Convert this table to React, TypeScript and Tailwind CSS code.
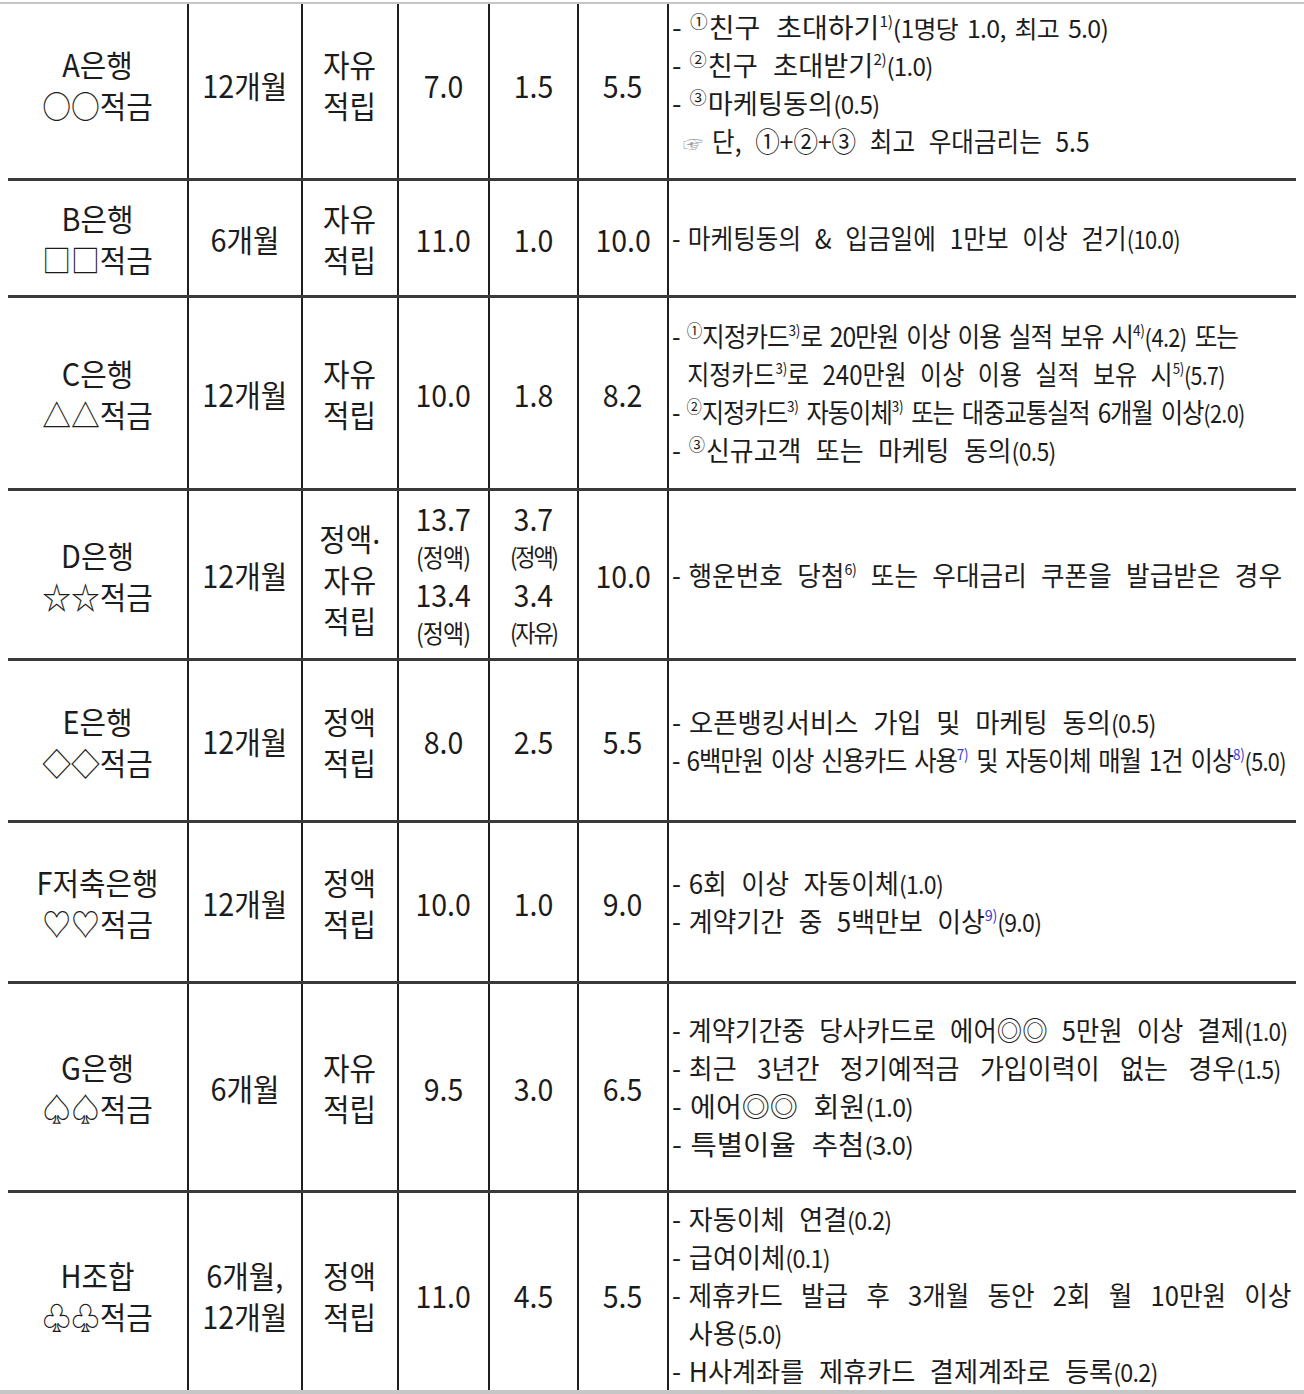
import React from "react";

type Seg =
  | string
  | { t: string; k: "sup" | "supb" | "sm" | "circ" | "hand" | "dash" };

type Line = { segs: Seg[]; indent?: string; tight?: boolean; ws?: string; sx: string };

type Row = {
  h: string;
  pad?: string;
  name: React.ReactNode[];
  period: React.ReactNode[];
  type: React.ReactNode[];
  max: React.ReactNode;
  base: React.ReactNode;
  pref: string;
  lines: Line[];
  last?: boolean;
};

const sup = (t: string): Seg => ({ t, k: "sup" });
const supb = (t: string): Seg => ({ t, k: "supb" });
const sm = (t: string): Seg => ({ t, k: "sm" });
const circ = (t: string): Seg => ({ t, k: "circ" });
const D: Seg = { t: "-", k: "dash" };

function SegView({ s }: { s: Seg }) {
  if (typeof s === "string") return <span>{s}</span>;
  if (s.k === "dash") return <span className="mr-[8px]">-</span>;
  if (s.k === "sup")
    return <span className="text-[15px] leading-none align-[11px] tracking-[-0.02em]">{s.t}</span>;
  if (s.k === "supb")
    return (
      <span className="text-[15px] leading-none align-[11px] tracking-[-0.02em] text-[#3b3bd6]">{s.t}</span>
    );
  if (s.k === "circ")
    return <span className="text-[17px] leading-none align-[10px] mr-[1px]">{s.t}</span>;
  if (s.k === "hand")
    return <span className="text-[22px] text-[#a0a0a0] mr-[10px]">{s.t}</span>;
  return <span className="text-[24px] tracking-[-0.03em] [word-spacing:4px]">{s.t}</span>;
}

function Stack({ lines }: { lines: React.ReactNode[] }) {
  return (
    <div className="text-center scale-x-[0.93] text-[31px] leading-[41px]">
      {lines.map((l, i) => (
        <div key={i} className="whitespace-nowrap">
          {l}
        </div>
      ))}
    </div>
  );
}

function Num({ v }: { v: string }) {
  return <div className="text-[31px] leading-[41px] scale-x-[0.92] whitespace-nowrap">{v}</div>;
}

function DualNum({ a, aa, b, bb, narrow }: { a: string; aa: string; b: string; bb: string; narrow?: boolean }) {
  const sub = narrow
    ? "text-[24px] leading-[38px] tracking-[-0.1em]"
    : "text-[25px] leading-[38px] tracking-[-0.04em]";
  return (
    <div className="text-center scale-x-[0.92] whitespace-nowrap">
      <div className="text-[31px] leading-[38px]">{a}</div>
      <div className={sub}>{aa}</div>
      <div className="text-[31px] leading-[38px]">{b}</div>
      <div className={sub}>{bb}</div>
    </div>
  );
}

const rows: Row[] = [
  {
    h: "h-[177px]",
    pad: "pb-[14px]",
    name: ["A은행", "○○적금"],
    period: ["12개월"],
    type: ["자유", "적립"],
    max: <Num v="7.0" />,
    base: <Num v="1.5" />,
    pref: "5.5",
    lines: [
      { segs: [D, circ("①"), "친구 초대하기", sup("1)"), sm("(1명당 1.0, 최고 5.0)")], sx: "scale-x-[1.04]" },
      { segs: [D, circ("②"), "친구 초대받기", sup("2)"), sm("(1.0)")], sx: "scale-x-[1.01]" },
      { segs: [D, circ("③"), "마케팅동의", sm("(0.5)")], sx: "scale-x-[1.01]" },
      {
        segs: [{ t: "☞", k: "hand" }, "단, ①+②+③ 최고 우대금리는 5.5"],
        indent: "pl-[12px]",
        sx: "scale-x-[0.91]",
      },
    ],
  },
  {
    h: "h-[117px]",
    name: ["B은행", "□□적금"],
    period: ["6개월"],
    type: ["자유", "적립"],
    max: <Num v="11.0" />,
    base: <Num v="1.0" />,
    pref: "10.0",
    lines: [{ segs: [D, "마케팅동의 & 입금일에 1만보 이상 걷기", sm("(10.0)")], sx: "scale-x-[0.912]" }],
  },
  {
    h: "h-[193px]",
    name: ["C은행", "△△적금"],
    period: ["12개월"],
    type: ["자유", "적립"],
    max: <Num v="10.0" />,
    base: <Num v="1.8" />,
    pref: "8.2",
    lines: [
      {
        segs: [D, circ("①"), "지정카드", sup("3)"), "로 20만원 이상 이용 실적 보유 시", sup("4)"), sm("(4.2)"), " 또는"],
        tight: true,
        sx: "scale-x-[0.914]",
      },
      {
        segs: ["지정카드", sup("3)"), "로 240만원 이상 이용 실적 보유 시", sup("5)"), sm("(5.7)")],
        indent: "pl-[17px]",
        sx: "scale-x-[0.89]",
      },
      {
        segs: [D, circ("②"), "지정카드", sup("3)"), " 자동이체", sup("3)"), " 또는 대중교통실적 6개월 이상", sm("(2.0)")],
        tight: true,
        sx: "scale-x-[0.902]",
      },
      { segs: [D, circ("③"), "신규고객 또는 마케팅 동의", sm("(0.5)")], sx: "scale-x-[0.96]" },
    ],
  },
  {
    h: "h-[170px]",
    name: ["D은행", "☆☆적금"],
    period: ["12개월"],
    type: [
      <span key="a">
        정액<span className="align-[7px]">.</span>
      </span>,
      "자유",
      "적립",
    ],
    max: <DualNum a="13.7" aa="(정액)" b="13.4" bb="(정액)" />,
    base: <DualNum a="3.7" aa="(정액)" b="3.4" bb="(자유)" narrow />,
    pref: "10.0",
    lines: [{ segs: [D, "행운번호 당첨", sup("6)"), " 또는 우대금리 쿠폰을 발급받은 경우"], sx: "scale-x-[0.95]" }],
  },
  {
    h: "h-[162px]",
    name: ["E은행", "◇◇적금"],
    period: ["12개월"],
    type: ["정액", "적립"],
    max: <Num v="8.0" />,
    base: <Num v="2.5" />,
    pref: "5.5",
    lines: [
      { segs: [D, "오픈뱅킹서비스 가입 및 마케팅 동의", sm("(0.5)")], sx: "scale-x-[0.975]" },
      {
        segs: [D, "6백만원 이상 신용카드 사용", supb("7)"), " 및 자동이체 매월 1건 이상", supb("8)"), sm("(5.0)")],
        tight: true,
        sx: "scale-x-[0.9]",
      },
    ],
  },
  {
    h: "h-[161px]",
    name: ["F저축은행", "♡♡적금"],
    period: ["12개월"],
    type: ["정액", "적립"],
    max: <Num v="10.0" />,
    base: <Num v="1.0" />,
    pref: "9.0",
    lines: [
      { segs: [D, "6회 이상 자동이체", sm("(1.0)")], sx: "scale-x-[0.96]" },
      { segs: [D, "계약기간 중 5백만보 이상", supb("9)"), sm("(9.0)")], sx: "scale-x-[0.96]" },
    ],
  },
  {
    h: "h-[209px]",
    name: ["G은행", "♤♤적금"],
    period: ["6개월"],
    type: ["자유", "적립"],
    max: <Num v="9.5" />,
    base: <Num v="3.0" />,
    pref: "6.5",
    lines: [
      { segs: [D, "계약기간중 당사카드로 에어◎◎ 5만원 이상 결제", sm("(1.0)")], sx: "scale-x-[0.94]" },
      {
        segs: [D, "최근 3년간 정기예적금 가입이력이 없는 경우", sm("(1.5)")],
        ws: "[word-spacing:15px]",
        sx: "scale-x-[0.965]",
      },
      { segs: [D, "에어◎◎ 회원", sm("(1.0)")], sx: "scale-x-[1.04]" },
      { segs: [D, "특별이율 추첨", sm("(3.0)")], sx: "scale-x-[1.06]" },
    ],
  },
  {
    h: "h-[197px]",
    pad: "pt-[6px]",
    name: ["H조합", "♧♧적금"],
    period: ["6개월,", "12개월"],
    type: ["정액", "적립"],
    max: <Num v="11.0" />,
    base: <Num v="4.5" />,
    pref: "5.5",
    last: true,
    lines: [
      { segs: [D, "자동이체 연결", sm("(0.2)")], sx: "scale-x-[0.965]" },
      { segs: [D, "급여이체", sm("(0.1)")], sx: "scale-x-[0.97]" },
      {
        segs: [D, "제휴카드 발급 후 3개월 동안 2회 월 10만원 이상"],
        ws: "[word-spacing:13px]",
        sx: "scale-x-[0.95]",
      },
      { segs: ["사용", sm("(5.0)")], indent: "pl-[17px]", sx: "scale-x-[0.975]" },
      { segs: [D, "H사계좌를 제휴카드 결제계좌로 등록", sm("(0.2)")], sx: "scale-x-[0.97]" },
    ],
  },
];

const cell = "flex items-center justify-center border-r-2 border-[#1f1f1f]";

export default function App() {
  return (
    <div className="w-[1304px] h-[1394px] bg-white overflow-hidden text-[#1c1c1c] font-['Noto_Sans_CJK_KR','Noto_Sans',sans-serif]">
      <div className="h-[2px]" />
      <div className="h-[2px] bg-[#c6c6c6]" />
      <div className="ml-[8px] w-[1288px]">
        {rows.map((r, i) => (
          <div
            key={i}
            className={`grid grid-cols-[181px_114px_96px_91px_89px_90px_627px] ${r.h} ${
              r.last ? "" : "border-b-[3px] border-[#3a3a3a]"
            }`}
          >
            <div className={`${cell} ${r.pad ?? ""}`}>
              <Stack lines={r.name} />
            </div>
            <div className={`${cell} ${r.pad ?? ""}`}>
              <Stack lines={r.period} />
            </div>
            <div className={`${cell} ${r.pad ?? ""}`}>
              <Stack lines={r.type} />
            </div>
            <div className={`${cell} ${r.pad ?? ""}`}>{r.max}</div>
            <div className={`${cell} ${r.pad ?? ""}`}>{r.base}</div>
            <div className={`${cell} ${r.pad ?? ""}`}>
              <Num v={r.pref} />
            </div>
            <div className={`flex flex-col justify-center pl-[3px] overflow-hidden ${r.pad ?? ""}`}>
              {r.lines.map((l, j) => {
                const ws = l.ws ?? (l.tight ? "[word-spacing:4px] tracking-[-0.045em]" : "[word-spacing:9px]");
                return (
                  <div
                    key={j}
                    className={`origin-left w-max h-[38px] leading-[38px] whitespace-nowrap text-[27px] ${l.sx} ${
                      l.indent ?? ""
                    } ${ws}`}
                  >
                    {l.segs.map((s, k) => (
                      <SegView key={k} s={s} />
                    ))}
                  </div>
                );
              })}
            </div>
          </div>
        ))}
      </div>
      <div className="h-[4px] bg-[#c6c6c6]" />
    </div>
  );
}
